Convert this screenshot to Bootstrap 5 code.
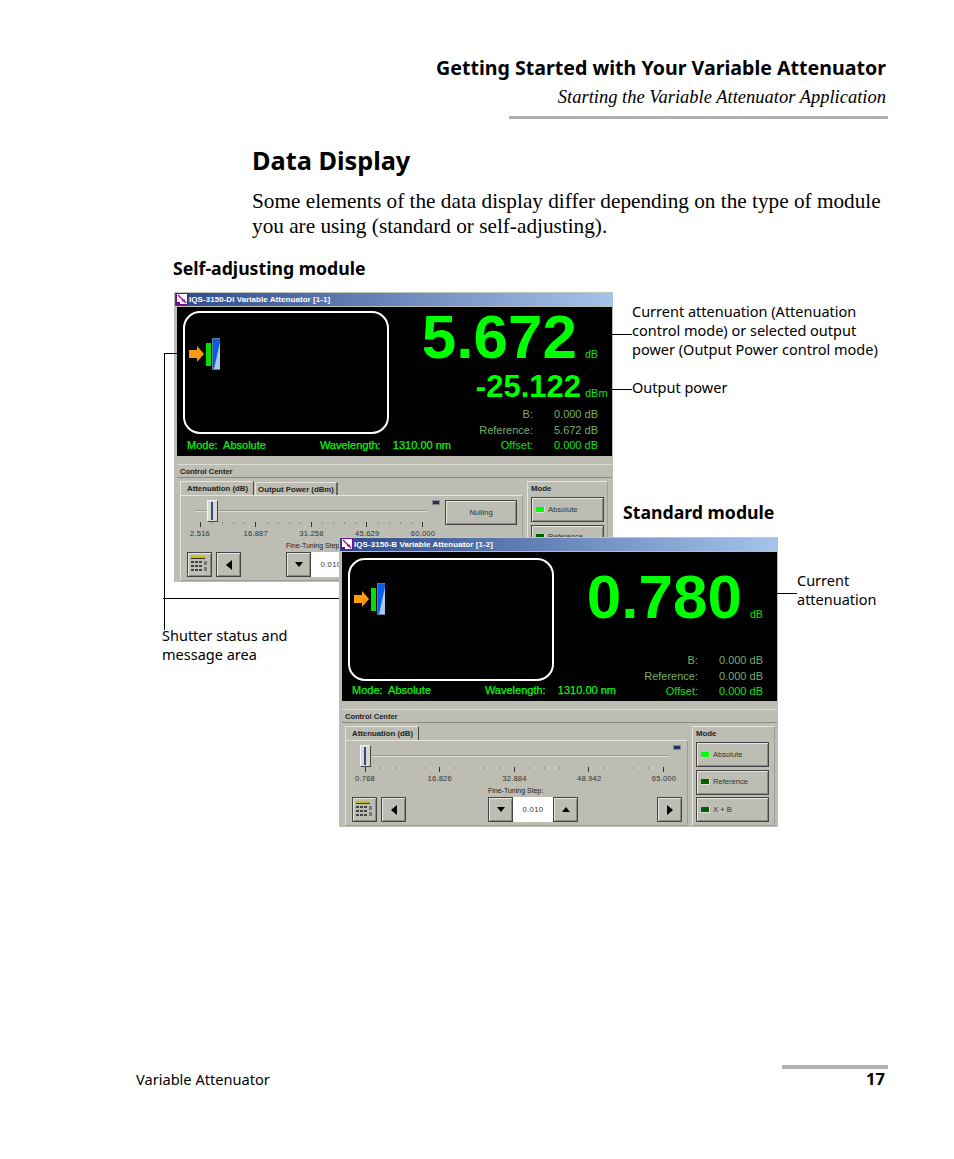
<!DOCTYPE html>
<html lang="en">
<head>
<meta charset="utf-8">
<title>Data Display</title>
<link href="https://cdn.jsdelivr.net/npm/bootstrap@5.3.0/dist/css/bootstrap.min.css" rel="stylesheet">
<style>
body{background:#fff;color:#000;font-family:"Noto Sans",sans-serif;}
.doc-page{height:1159px;padding:0 66px 0 136px;}
.run-head{padding-top:56px;}
.run-title{font-size:19.6px;font-weight:700;line-height:23px;padding-right:2px;margin:0;}
.run-sub{font-family:"Liberation Serif",serif;font-style:italic;font-size:18.5px;line-height:22px;padding-right:2px;margin:7px 0 0;}
.run-rule{height:3px;width:379px;background:#b0b0b0;margin-top:8px;}
.sec-title{font-size:25.3px;font-weight:700;line-height:32px;margin:25px 0 0 116px;}
.sec-text{font-family:"Liberation Serif",serif;font-size:21.25px;line-height:25px;margin:13px 0 0 116px;white-space:nowrap;}
.fig-canvas{position:relative;margin:19px -66px 0 -136px;height:571px;}
.fig-head{position:absolute;font-size:17.7px;font-weight:700;line-height:20px;margin:0;white-space:nowrap;}
.note{position:absolute;font-size:14.5px;line-height:19px;white-space:nowrap;margin:0;}
.lead-h{position:absolute;height:1px;background:#000;}
.lead-v{position:absolute;width:1px;background:#000;}
.w-app{position:absolute;width:439px;height:290px;background:#bdbdb3;overflow:hidden;font-family:"Liberation Sans",sans-serif;border-top:1px solid #c4c4ba;}
.w-bar{height:13px;margin-left:1px;background:linear-gradient(90deg,#2f4a8c,#a4c4ea);color:#fff;font-size:8px;font-weight:700;line-height:13px;white-space:nowrap;letter-spacing:.05px;}
.w-ico{width:12px;height:12px;margin:0 1px 0 1px;flex:none;}
.w-disp{background:#000;margin:1px 1px 0 3px;height:149px;color:#15e015;}
.w-left{width:273px;flex:none;padding-left:6px;}
.w-right{padding-right:14px;min-width:0;}
.shut{width:206px;height:123px;border:2px solid #fff;border-radius:17px;margin-top:4px;padding:25px 0 0 4px;}
.shut-b{margin-top:6px;padding-top:23px;}
.shut svg{display:block;}
.w-status{font-size:11px;line-height:15px;white-space:pre;padding-left:4px;margin-top:4px;font-weight:400;color:#12f012;-webkit-text-stroke:.25px #12f012;}
.w-status-b{margin-top:2px;}
.wl-gap{margin-left:54px;}
.big{font-size:62px;font-weight:700;line-height:50px;color:#00ff00;margin-top:5px;white-space:nowrap;}
.big-b{margin-top:20px;}
.mid{font-size:31px;font-weight:700;line-height:26px;color:#00ff00;margin-top:12px;white-space:nowrap;}
.unit{font-size:10.5px;font-weight:400;line-height:10px;color:#10e010;width:13px;margin-left:8px;white-space:nowrap;letter-spacing:0;}
.unit-m{font-size:11px;margin-left:4px;}
.dtl{margin-top:7px;font-size:11px;line-height:15.5px;}
.dtl-b{margin-top:31px;}
.dtl-row{color:#78ae68;white-space:nowrap;}
.dtl-row.on{color:#12e012;}
.dtl-k{width:90px;text-align:right;}
.dtl-v{width:65px;text-align:right;}
.cc{margin:8px 1px 0 3px;font-family:"Liberation Sans",sans-serif;font-size:7.8px;color:#222;}
.cc-head{height:14px;line-height:14px;font-weight:700;font-size:7.5px;padding-left:3px;border-top:1px solid #dcdcd4;border-bottom:1px solid #8b8b80;margin-bottom:3px;}
.cc-body{margin-left:3px;gap:4px;}
.tab-col{width:343px;flex:none;}
.tab-strip{height:14px;gap:1px;font-weight:700;}
.tab-i{border-right:1px solid #444;border-top:1px solid #e4e4dc;border-left:1px solid #e4e4dc;padding:0 5px 0 6px;line-height:13px;white-space:nowrap;}
.tab-i.off{margin-top:1px;border-right:2px solid #666;padding:0 2px 0 2px;}
.tab-pane{height:86px;border:1px solid #9d9d92;border-top-color:#e4e4dc;border-left-color:#e4e4dc;padding:4px 5px 0 5px;}
.slide-row{height:52px;padding-left:9px;gap:4px;}
.slide{position:relative;}
.slide-a{width:235px;}
.slide-b{width:309px;}
.track{position:absolute;left:0;right:0;top:10px;height:2px;background:#dcdcd2;border-top:1px solid #9a9a8e;}
.thumb{position:absolute;top:0;width:11px;height:22px;background:#d8d8d0;border:1px solid #444;border-top-color:#f4f4f4;border-left-color:#f4f4f4;}
.thumb::after{content:"";position:absolute;left:3px;top:1px;bottom:1px;width:2px;background:#2c4a88;}
.ticks{position:absolute;top:22px;left:5px;right:5px;height:5px;}
.ticks i{width:1px;height:2px;background:#8c8c80;display:block;}
.ticks i.mj{height:5px;background:#333;}
.tlabs{position:absolute;top:28px;left:-10px;right:-10px;font-size:7.6px;line-height:11px;letter-spacing:.2px;color:#333;}
.tlabs span{width:30px;text-align:center;display:block;}
.led-mini{width:8px;height:5px;background:#1c3560;border:1px solid #888;margin-top:0;flex:none;}
.null-btn{width:72px;height:25px;margin-top:0;margin-left:1px;}
.bev{display:flex;align-items:center;justify-content:center;padding:0;border-radius:0;background:#bdbdb3;border:1px solid #444;box-shadow:inset 1px 1px 0 #e6e6de,inset -1px -1px 0 #8a8a7e;color:#333;font-family:"Liberation Sans",sans-serif;font-size:7.6px;flex:none;}
.bev:hover{background:#bdbdb3;color:#333;border-color:#444;}
.bev-s{width:25px;height:25px;}
.ctl-row{padding-left:1px;}
.gap-side{gap:4px;}
.tri-l{width:0;height:0;border:5px solid transparent;border-right:6px solid #000;border-left:0;}
.tri-r{width:0;height:0;border:5px solid transparent;border-left:6px solid #000;border-right:0;}
.tri-d{width:0;height:0;border:4px solid transparent;border-top:5px solid #000;border-bottom:0;}
.tri-u{width:0;height:0;border:4px solid transparent;border-bottom:5px solid #000;border-top:0;}
.fine-a{margin-left:45px;}
.fine-b{margin-left:82px;}
.fine-lab{font-size:7px;line-height:10px;margin-top:-11px;height:11px;white-space:nowrap;}
.fine-val{width:40px;height:25px;background:#fff;font-size:7.6px;letter-spacing:.4px;color:#333;}
.mode-col{width:83px;flex:none;height:100px;border:1px solid #9d9d92;border-top-color:#e4e4dc;border-left-color:#e4e4dc;padding:0 5px 0 3px;}
.mode-col-a{width:81px;}
.mode-lab{font-weight:700;height:15px;line-height:14px;}
.mode-btn{width:73px;height:25px;justify-content:flex-start;padding-left:4px;margin-bottom:2.5px;}
.led{width:9px;height:6px;margin-right:3px;flex:none;border-right:1px solid #ddd;border-bottom:1px solid #ddd;}
.led.lit{background:#0f0;}
.led.dim{background:#006000;}
.foot{padding-bottom:70px;}
.foot-rule{width:106px;height:4px;background:#b0b0b0;}
.foot-l{font-size:14.6px;line-height:20px;margin:0;}
.foot-n{font-size:16.5px;font-weight:700;line-height:20px;margin:0 3px 0 0;}
</style>
</head>
<body>
<div class="doc-page d-flex flex-column">
  <header class="run-head d-flex flex-column align-items-end">
    <h2 class="run-title">Getting Started with Your Variable Attenuator</h2>
    <p class="run-sub">Starting the Variable Attenuator Application</p>
    <div class="run-rule"></div>
  </header>
  <h1 class="sec-title">Data Display</h1>
  <p class="sec-text">Some elements of the data display differ depending on the type of module<br>you are using (standard or self-adjusting).</p>

  <section class="fig-canvas">
    <h3 class="fig-head" style="left:173px;top:0">Self-adjusting module</h3>

    <div class="w-app" style="left:174px;top:34px">
      <div class="w-bar d-flex"><svg class="w-ico" viewBox="0 0 12 12"><rect width="12" height="12" fill="#fff"/><rect x=".5" y=".5" width="11" height="11" fill="none" stroke="#701080"/><path d="M2 2l8 8M6 8l3-1" stroke="#a01090" stroke-width="1.4"/><rect x="1" y="9" width="3" height="2" fill="#701080"/></svg>IQS-3150-DI Variable Attenuator [1-1]</div>
      <div class="w-disp d-flex">
        <div class="w-left">
          <div class="shut"><svg width="31" height="32" viewBox="0 0 31 32"><path d="M0 12h8V8l7 8-7 8v-4H0z" fill="#ff9a10"/><rect x="17" y="5" width="5" height="23" fill="#00e000"/><rect x="23.5" y=".5" width="8" height="31" fill="#a9c8ee" stroke="#5c7c9c"/><path d="M24 1h7v3l-6 27h-1z" fill="#0a5ce0"/></svg></div>
          <div class="w-status">Mode:  Absolute<span class="wl-gap">Wavelength:    1310.00 nm</span></div>
        </div>
        <div class="w-right flex-grow-1 d-flex flex-column align-items-end">
          <div class="big d-flex align-items-baseline">5.672<span class="unit">dB</span></div>
          <div class="mid d-flex align-items-baseline">-25.122<span class="unit unit-m">dBm</span></div>
          <div class="dtl">
            <div class="dtl-row d-flex"><span class="dtl-k">B:</span><span class="dtl-v">0.000 dB</span></div>
            <div class="dtl-row d-flex"><span class="dtl-k">Reference:</span><span class="dtl-v">5.672 dB</span></div>
            <div class="dtl-row on d-flex"><span class="dtl-k">Offset:</span><span class="dtl-v">0.000 dB</span></div>
          </div>
        </div>
      </div>
      <div class="cc">
        <div class="cc-head">Control Center</div>
        <div class="cc-body d-flex">
          <div class="tab-col">
            <div class="tab-strip d-flex"><span class="tab-i">Attenuation (dB)</span><span class="tab-i off">Output Power (dBm)</span></div>
            <div class="tab-pane">
              <div class="slide-row d-flex">
                <div class="slide slide-a">
                  <div class="track"></div>
                  <div class="thumb" style="left:12px"></div>
                  <div class="ticks d-flex justify-content-between"><i class="mj"></i><i></i><i></i><i></i><i></i><i class="mj"></i><i></i><i></i><i></i><i></i><i class="mj"></i><i></i><i></i><i></i><i></i><i class="mj"></i><i></i><i></i><i></i><i></i><i class="mj"></i></div>
                  <div class="tlabs d-flex justify-content-between"><span>2.516</span><span>16.887</span><span>31.258</span><span>45.629</span><span>60.000</span></div>
                </div>
                <div class="led-mini"></div>
                <button class="bev null-btn btn" type="button">Nulling</button>
              </div>
              <div class="ctl-row d-flex align-items-start">
                <div class="d-flex gap-side">
                  <button class="bev bev-s btn" type="button" aria-label="Keypad"><svg width="19" height="17" viewBox="0 0 19 17"><rect x="1" y="0" width="14" height="2" fill="#c4c400"/><rect x="1" y="2" width="14" height="1" fill="#333"/><g fill="#444"><rect x="1" y="5" width="3" height="2"/><rect x="5" y="5" width="3" height="2"/><rect x="9" y="5" width="3" height="2"/><rect x="1" y="9" width="3" height="2"/><rect x="5" y="9" width="3" height="2"/><rect x="9" y="9" width="3" height="2"/><rect x="1" y="13" width="3" height="2"/><rect x="5" y="13" width="3" height="2"/><rect x="9" y="13" width="3" height="2"/></g><rect x="14" y="5" width="3" height="4" fill="#777"/><rect x="14" y="11" width="3" height="4" fill="#777"/></svg></button>
                  <button class="bev bev-s btn" type="button" aria-label="Previous"><span class="tri-l"></span></button>
                </div>
                <div class="fine-a">
                  <div class="fine-lab">Fine-Tuning Step:</div>
                  <div class="d-flex">
                    <button class="bev bev-s btn" type="button" aria-label="Down"><span class="tri-d"></span></button>
                    <div class="fine-val d-flex align-items-center justify-content-center">0.010</div>
                    <button class="bev bev-s btn" type="button" aria-label="Up"><span class="tri-u"></span></button>
                  </div>
                </div>
              </div>
            </div>
          </div>
          <div class="mode-col mode-col-a">
            <div class="mode-lab">Mode</div>
            <button class="bev mode-btn btn" type="button"><span class="led lit"></span>Absolute</button>
            <button class="bev mode-btn btn" type="button"><span class="led dim"></span>Reference</button>
          </div>
        </div>
      </div>
    </div>

    <div class="note" style="left:632px;top:44px">Current attenuation (Attenuation<br>control mode) or selected output<br>power (Output Power control mode)</div>
    <div class="lead-h" style="left:611px;top:76px;width:21px"></div>
    <div class="note" style="left:632px;top:120px">Output power</div>
    <div class="lead-h" style="left:611px;top:131px;width:21px"></div>

    <div class="lead-h" style="left:164px;top:95px;width:13px"></div>
    <div class="lead-v" style="left:164px;top:95px;height:277px"></div>
    <div class="lead-h" style="left:163px;top:340px;width:178px"></div>
    <div class="note" style="left:162px;top:368px">Shutter status and<br>message area</div>

    <h3 class="fig-head" style="left:623px;top:244px">Standard module</h3>

    <div class="w-app" style="left:339px;top:279px">
      <div class="w-bar d-flex"><svg class="w-ico" viewBox="0 0 12 12"><rect width="12" height="12" fill="#fff"/><rect x=".5" y=".5" width="11" height="11" fill="none" stroke="#701080"/><path d="M2 2l8 8M6 8l3-1" stroke="#a01090" stroke-width="1.4"/><rect x="1" y="9" width="3" height="2" fill="#701080"/></svg>IQS-3150-B Variable Attenuator [1-2]</div>
      <div class="w-disp d-flex">
        <div class="w-left">
          <div class="shut shut-b"><svg width="31" height="32" viewBox="0 0 31 32"><path d="M0 12h8V8l7 8-7 8v-4H0z" fill="#ff9a10"/><rect x="17" y="5" width="5" height="23" fill="#00e000"/><rect x="23.5" y=".5" width="8" height="31" fill="#a9c8ee" stroke="#5c7c9c"/><path d="M24 1h7v3l-6 27h-1z" fill="#0a5ce0"/></svg></div>
          <div class="w-status w-status-b">Mode:  Absolute<span class="wl-gap">Wavelength:    1310.00 nm</span></div>
        </div>
        <div class="w-right flex-grow-1 d-flex flex-column align-items-end">
          <div class="big big-b d-flex align-items-baseline">0.780<span class="unit">dB</span></div>
          <div class="dtl dtl-b">
            <div class="dtl-row d-flex"><span class="dtl-k">B:</span><span class="dtl-v">0.000 dB</span></div>
            <div class="dtl-row d-flex"><span class="dtl-k">Reference:</span><span class="dtl-v">0.000 dB</span></div>
            <div class="dtl-row on d-flex"><span class="dtl-k">Offset:</span><span class="dtl-v">0.000 dB</span></div>
          </div>
        </div>
      </div>
      <div class="cc">
        <div class="cc-head">Control Center</div>
        <div class="cc-body d-flex">
          <div class="tab-col">
            <div class="tab-strip d-flex"><span class="tab-i">Attenuation (dB)</span></div>
            <div class="tab-pane">
              <div class="slide-row d-flex">
                <div class="slide slide-b">
                  <div class="track"></div>
                  <div class="thumb" style="left:0"></div>
                  <div class="ticks d-flex justify-content-between"><i class="mj"></i><i></i><i></i><i></i><i></i><i class="mj"></i><i></i><i></i><i></i><i></i><i class="mj"></i><i></i><i></i><i></i><i></i><i class="mj"></i><i></i><i></i><i></i><i></i><i class="mj"></i></div>
                  <div class="tlabs d-flex justify-content-between"><span>0.768</span><span>16.826</span><span>32.884</span><span>48.942</span><span>65.000</span></div>
                </div>
                <div class="led-mini"></div>
              </div>
              <div class="ctl-row d-flex align-items-start">
                <div class="d-flex gap-side">
                  <button class="bev bev-s btn" type="button" aria-label="Keypad"><svg width="19" height="17" viewBox="0 0 19 17"><rect x="1" y="0" width="14" height="2" fill="#c4c400"/><rect x="1" y="2" width="14" height="1" fill="#333"/><g fill="#444"><rect x="1" y="5" width="3" height="2"/><rect x="5" y="5" width="3" height="2"/><rect x="9" y="5" width="3" height="2"/><rect x="1" y="9" width="3" height="2"/><rect x="5" y="9" width="3" height="2"/><rect x="9" y="9" width="3" height="2"/><rect x="1" y="13" width="3" height="2"/><rect x="5" y="13" width="3" height="2"/><rect x="9" y="13" width="3" height="2"/></g><rect x="14" y="5" width="3" height="4" fill="#777"/><rect x="14" y="11" width="3" height="4" fill="#777"/></svg></button>
                  <button class="bev bev-s btn" type="button" aria-label="Previous"><span class="tri-l"></span></button>
                </div>
                <div class="fine-b">
                  <div class="fine-lab">Fine-Tuning Step:</div>
                  <div class="d-flex">
                    <button class="bev bev-s btn" type="button" aria-label="Down"><span class="tri-d"></span></button>
                    <div class="fine-val d-flex align-items-center justify-content-center">0.010</div>
                    <button class="bev bev-s btn" type="button" aria-label="Up"><span class="tri-u"></span></button>
                  </div>
                </div>
                <button class="bev bev-s btn ms-auto" type="button" aria-label="Next"><span class="tri-r"></span></button>
              </div>
            </div>
          </div>
          <div class="mode-col">
            <div class="mode-lab">Mode</div>
            <button class="bev mode-btn btn" type="button"><span class="led lit"></span>Absolute</button>
            <button class="bev mode-btn btn" type="button"><span class="led dim"></span>Reference</button>
            <button class="bev mode-btn btn" type="button"><span class="led dim"></span>X + B</button>
          </div>
        </div>
      </div>
    </div>

    <div class="lead-h" style="left:777px;top:335px;width:20px"></div>
    <div class="note" style="left:797px;top:313px">Current<br>attenuation</div>
  </section>

  <footer class="foot mt-auto d-flex justify-content-between align-items-start">
    <p class="foot-l mb-0 align-self-end">Variable Attenuator</p>
    <div class="d-flex flex-column align-items-end">
      <div class="foot-rule"></div>
      <p class="foot-n">17</p>
    </div>
  </footer>
</div>
</body>
</html>
